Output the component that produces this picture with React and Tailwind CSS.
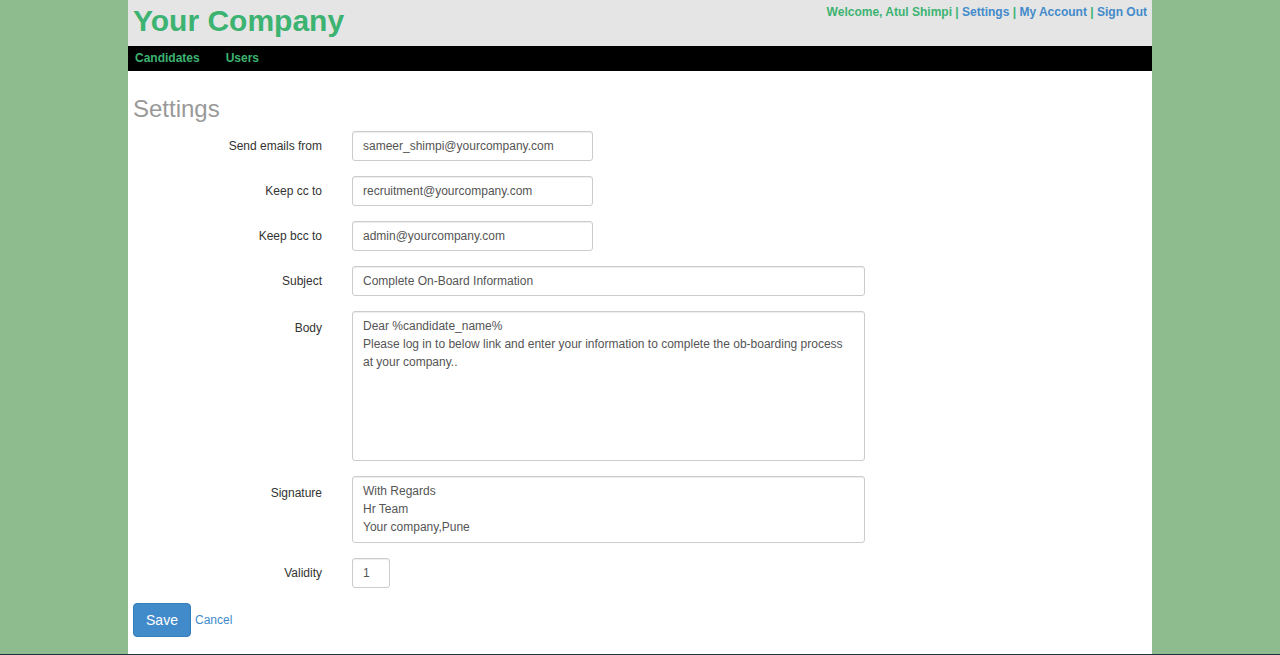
const fieldCls =
  "h-[30px] border border-[#cccccc] rounded-[3px] px-[10px] text-[12px] text-[#555555] bg-white outline-none shadow-[inset_0_1px_1px_rgba(0,0,0,0.075)]";

function Row({ label, top, children }) {
  return (
    <div className={`flex ${top ? "items-start" : "items-center"}`}>
      <label
        className={`w-[189px] shrink-0 text-right text-[12px] text-[#333333] ${top ? "pt-[8px]" : ""}`}
      >
        {label}
      </label>
      <div className="ml-[30px]">{children}</div>
    </div>
  );
}

export default function App() {
  return (
    <div
      className="min-h-screen bg-[#8fbc8f]"
      style={{ fontFamily: '"Liberation Sans", Arial, sans-serif' }}
    >
      <div className="w-[1024px] mx-auto bg-white">
        {/* Header */}
        <div className="h-[46px] bg-[#e5e5e5] flex justify-between px-[5px]">
          <h1 className="text-[30px] font-bold text-[#3cb371] leading-none pt-[6px]">
            Your Company
          </h1>
          <div className="text-[12px] font-bold pt-[3px] text-[#3cb371]">
            Welcome, Atul Shimpi |{" "}
            <a className="text-[#428bca]">Settings</a> |{" "}
            <a className="text-[#428bca]">My Account</a> |{" "}
            <a className="text-[#428bca]">Sign Out</a>
          </div>
        </div>

        {/* Nav */}
        <div className="h-[25px] bg-black flex items-center gap-[26px] px-[7px] pb-[1px] text-[12px] font-bold text-[#3cb371]">
          <a>Candidates</a>
          <a>Users</a>
        </div>

        {/* Content */}
        <div className="px-[5px] pt-[26px] pb-[17px]">
          <h2 className="text-[24px] text-[#999999] leading-none mb-[10px]">
            Settings
          </h2>

          <div className="flex flex-col gap-[15px]">
            <Row label="Send emails from">
              <input
                className={`${fieldCls} w-[241px]`}
                defaultValue="sameer_shimpi@yourcompany.com"
              />
            </Row>
            <Row label="Keep cc to">
              <input
                className={`${fieldCls} w-[241px]`}
                defaultValue="recruitment@yourcompany.com"
              />
            </Row>
            <Row label="Keep bcc to">
              <input
                className={`${fieldCls} w-[241px]`}
                defaultValue="admin@yourcompany.com"
              />
            </Row>
            <Row label="Subject">
              <input
                className={`${fieldCls} w-[513px]`}
                defaultValue="Complete On-Board Information"
              />
            </Row>
            <Row label="Body" top>
              <textarea
                className={`${fieldCls} w-[513px] h-[150px] py-[5px] leading-[18px] resize-none block`}
                defaultValue={
                  "Dear %candidate_name%\nPlease log in to below link and enter your information to complete the ob-boarding process at your company.."
                }
              />
            </Row>
            <Row label="Signature" top>
              <textarea
                className={`${fieldCls} w-[513px] h-[67px] py-[5px] leading-[18px] resize-none block`}
                defaultValue={"With Regards\nHr Team\nYour company,Pune"}
              />
            </Row>
            <Row label="Validity">
              <input className={`${fieldCls} w-[38px]`} defaultValue="1" />
            </Row>
          </div>

          <div className="flex items-start mt-[15px]">
            <button className="w-[58px] h-[34px] bg-[#428bca] border border-[#357ebd] rounded-[4px] text-white text-[14px]">
              Save
            </button>
            <a className="ml-[4px] mt-[8px] text-[12px] text-[#428bca]">
              Cancel
            </a>
          </div>
        </div>
      </div>
      <div className="h-[40px] bg-[#22303d]" />
    </div>
  );
}
